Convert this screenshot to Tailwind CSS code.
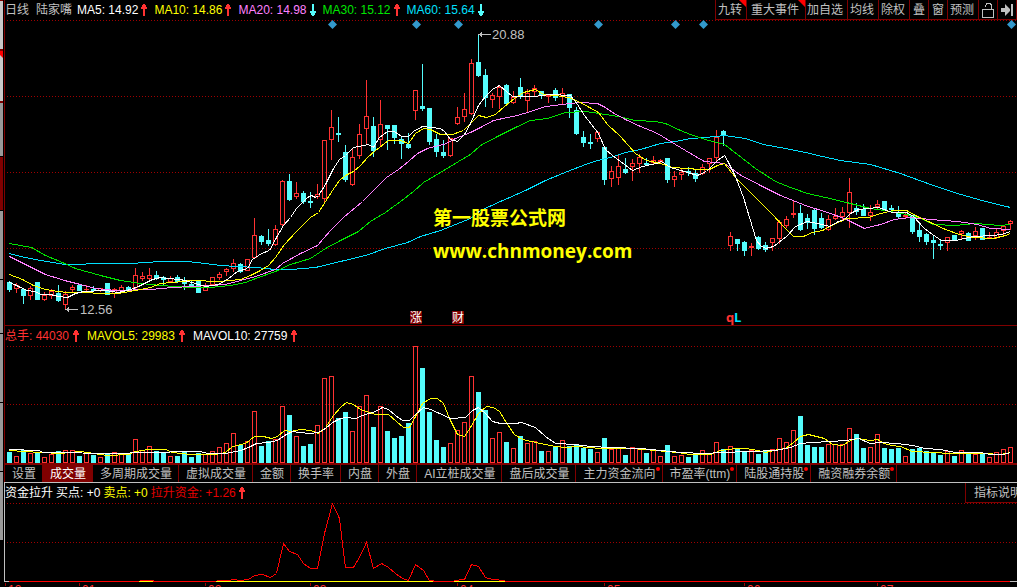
<!DOCTYPE html>
<html lang="zh-CN">
<head>
<meta charset="utf-8">
<title>陆家嘴 日线</title>
<script src="https://cdn.jsdelivr.net/npm/@tailwindcss/browser@4"></script>
</head>
<body class="bg-black text-[#c0c0c0] text-xs leading-5 font-['Liberation_Sans','Noto_Sans_CJK_SC',sans-serif]">
<svg class="hidden" aria-hidden="true">
  <symbol id="up" viewBox="0 0 6 12"><path d="M2 12V5H0V3H1V1H2V0H4V1H5V3H6V5H4V12Z" fill="#ff3232"/></symbol>
  <symbol id="down" viewBox="0 0 6 12"><path d="M2 0V7H0V9H1V11H2V12H4V11H5V9H6V7H4V0Z" fill="#54fcfc"/></symbol>
</svg>
<div class="flex h-screen overflow-hidden">
  <aside class="flex w-1 shrink-0 flex-col border-r border-black" aria-label="侧栏">
    <div class="h-[49px] border-t border-[#800000] bg-[#c8c8c8]"></div>
    <div class="h-0.5 bg-[#800000]"></div>
    <div class="h-[50px] bg-[#c8c8c8]"><svg viewBox="0 0 3 8" class="h-2 w-full"><path d="M0 0H3V7L0 4Z" fill="#f00"/></svg></div>
    <div class="h-0.5 bg-[#800000]"></div>
    <div class="h-[53px] bg-[#999]"></div>
    <div class="mt-px h-[53px] bg-[#800000]"></div>
    <div class="mt-px h-[68px] bg-[#999]"></div>
    <div class="mt-px h-[53px] bg-[#999]"></div>
    <div class="mt-px h-[68px] bg-[#999]"></div>
    <div class="mt-px h-[68px] bg-[#999]"></div>
    <div class="mt-px h-[68px] bg-[#999]"></div>
  </aside>
  <main class="flex min-w-0 flex-1 flex-col">
    <div class="border-l border-[#800000]">
      <header class="flex h-5 justify-between whitespace-nowrap">
        <div class="flex items-center gap-[7px]">
          <div class="flex gap-[7px]"><span>日线</span><span>陆家嘴</span></div>
          <div class="-ml-0.5 flex items-center gap-[3px] text-white">MA5: 14.92<svg class="h-3 w-1.5"><use href="#up"/></svg></div>
          <div class="flex items-center gap-[3px] text-[#ffff00]">MA10: 14.86<svg class="h-3 w-1.5"><use href="#up"/></svg></div>
          <div class="flex items-center gap-[3px] text-[#ff80ff]">MA20: 14.98<svg class="h-3 w-1.5"><use href="#down"/></svg></div>
          <div class="flex items-center gap-[3px] text-[#00e600]">MA30: 15.12<svg class="h-3 w-1.5"><use href="#up"/></svg></div>
          <div class="flex items-center gap-[3px] text-[#00e0ff]">MA60: 15.64<svg class="h-3 w-1.5"><use href="#down"/></svg></div>
        </div>
        <nav class="flex border-r border-b border-[#800000] *:border-l *:border-[#800000]">
          <button class="relative pr-1 pl-0.5">九转<svg class="absolute top-0 right-0 size-[7px]" viewBox="0 0 7 7"><path d="M0 0H7V7Z" fill="#f00"/></svg></button>
          <button class="relative pr-1.5 pl-1">重大事件<svg class="absolute top-0 right-0 size-[7px]" viewBox="0 0 7 7"><path d="M0 0H7V7Z" fill="#f00"/></svg></button>
          <button class="pr-1 pl-px">加自选</button>
          <button class="pr-1 pl-0.5">均线</button>
          <button class="pr-1 pl-0.5">除权</button>
          <button class="px-[3px]">叠</button>
          <button class="px-[3px]">窗</button>
          <button class="pr-1 pl-0.5">预测</button>
          <button class="px-[3px]" aria-label="锁定"><svg class="h-4 w-3" viewBox="0 0 12 16" fill="none" stroke="#c0c0c0" shape-rendering="crispEdges"><path d="M.5 7.5H11.5V15.5H.5Z"/><path d="M3.500 5V3.500L5 1.500H8L9.500 3V7"/></svg></button>
          <button class="px-[3px]" aria-label="移到最后"><svg class="h-3 w-3" viewBox="0 0 12 12" fill="#c0c0c0"><path d="M0 4H4V0L9 5V7L4 12V8H0ZM10 0H12V12H10Z"/></svg></button>
        </nav>
      </header>
      <section aria-label="K线图">
        <svg id="price" class="block h-[305px] w-full" viewBox="5 20 1012 305" preserveAspectRatio="none" shape-rendering="crispEdges"></svg>
      </section>
      <section class="border-t border-[#800000]" aria-label="成交量">
        <div class="flex h-5 items-center gap-2 whitespace-nowrap">
          <div class="flex items-center gap-1 text-[#ff3232]">总手: 44030<svg class="h-3 w-1.5"><use href="#up"/></svg></div>
          <div class="flex items-center gap-1 text-[#ffff00]">MAVOL5: 29983<svg class="h-3 w-1.5"><use href="#up"/></svg></div>
          <div class="flex items-center gap-1 text-white">MAVOL10: 27759<svg class="h-3 w-1.5"><use href="#up"/></svg></div>
        </div>
        <svg id="volume" class="block h-[117px] w-full" viewBox="5 346 1012 117" preserveAspectRatio="none" shape-rendering="crispEdges"></svg>
      </section>
      <nav class="flex h-[19px] border-t-2 border-[#800000] leading-4 whitespace-nowrap *:border-r *:border-[#800000] *:pr-1.5 *:pl-[7px]">
        <button>设置</button>
        <button class="bg-[#800000] text-white">成交量</button>
        <button>多周期成交量</button>
        <button>虚拟成交量</button>
        <button>金额</button>
        <button>换手率</button>
        <button>内盘</button>
        <button>外盘</button>
        <button>AI立桩成交量</button>
        <button>盘后成交量</button>
        <button class="relative">主力资金流向<i class="absolute top-0.5 right-0.5 size-1 rounded-full bg-[#f00]"></i></button>
        <button class="relative">市盈率(ttm)<i class="absolute top-0.5 right-0.5 size-1 rounded-full bg-[#f00]"></i></button>
        <button class="relative">陆股通持股<i class="absolute top-0.5 right-0.5 size-1 rounded-full bg-[#f00]"></i></button>
        <button class="relative">融资融券余额<i class="absolute top-0.5 right-0.5 size-1 rounded-full bg-[#f00]"></i></button>
      </nav>
    </div>
    <section class="border-t border-l border-[#c0c0c0]" aria-label="资金拉升">
      <div class="flex h-5 justify-between whitespace-nowrap">
        <div class="flex items-center gap-[3px] text-white">
          <span>资金拉升</span><span>买点: +0</span><span class="text-[#ffff00]">卖点: +0</span>
          <span class="flex items-center gap-[3px] text-[#e60000]">拉升资金: +1.26<svg class="h-3 w-1.5"><use href="#up"/></svg></span>
        </div>
        <button class="w-[52px] overflow-hidden border-b border-l border-[#800000] pl-2 text-left leading-[18px]">指标说明</button>
      </div>
      <svg id="fund" class="block h-[78px] w-full" viewBox="5 503 1012 78" preserveAspectRatio="none" shape-rendering="crispEdges"></svg>
    </section>
    <svg id="axis" class="block h-1.5 w-full shrink-0" viewBox="4 581 1013 6" preserveAspectRatio="none"></svg>
  </main>
</div>
<script>
// Each candle: direction (r = rise, c = fall), high, body top, body bottom, low
const candles = `c281,282,289,291 r283,285,288,292 c289,289,295,303 r286,288,295,299 c282,282,299,299 r292,295,299,300 r289,291,295,298 c285,293,300,301 r291,294,304,309 r285,287,289,291
c285,285,290,290 r285,289,289,291 c286,289,290,291 r288,288,290,291 c283,283,294,294 r288,289,293,297 r285,287,290,291 c286,287,289,290 r268,275,287,288 r272,276,278,280
r268,275,278,279 c271,275,278,279 c276,277,279,285 r276,278,281,281 c275,277,281,282 c277,281,283,289 c281,284,286,287 c281,281,292,292 r283,285,290,290 r277,277,284,285
r272,274,277,279 r268,269,271,275 r259,263,268,271 c263,264,271,272 r259,259,270,270 r218,235,257,258 c235,236,241,244 c229,240,243,245 r225,229,244,245 r180,181,224,225
c174,181,199,200 r182,193,196,198 c191,193,201,203 c192,201,202,207 r184,194,196,198 r140,140,198,201 r110,127,139,159 c117,133,134,141 c145,152,179,181 r148,157,184,185
r124,134,155,158 r80,116,128,144 c117,126,150,156 r100,124,139,146 c125,125,128,149 c125,125,137,143 c136,139,143,158 c133,144,147,148 r90,90,110,119 c64,106,108,110
c108,108,141,144 c134,139,151,156 c140,152,155,157 r138,138,155,156 r107,117,123,124 r93,109,116,121 r59,63,113,114 c34,62,75,76 c69,75,97,106 r93,95,99,107
r85,87,96,108 c84,85,103,104 r91,97,102,103 c78,87,96,98 r89,93,100,111 r85,88,91,95 c91,91,94,98 r94,95,96,102 c88,90,97,100 r88,93,96,103
c94,94,107,117 c107,110,133,134 c131,137,142,146 c134,142,143,148 r131,132,138,141 c146,147,179,184 r166,171,178,186 r155,166,177,184 c158,169,172,173 r159,163,166,180
r154,157,163,172 c158,163,164,165 r156,160,162,164 r159,160,161,162 c158,158,179,182 r171,176,179,186 r168,172,174,179 c167,171,172,175 c170,173,178,181 r164,167,173,174
r158,158,163,172 r130,137,157,160 c130,131,135,145 r232,236,245,250 c239,239,243,250 c241,242,250,255 r243,246,247,255 c236,237,248,249 c242,245,249,251 r238,238,242,250
r220,222,238,243 r216,219,225,227 r200,213,214,217 c205,213,229,230 c214,218,222,228 c208,210,228,234 c213,218,227,228 r215,219,229,230 r208,216,218,219 r207,212,216,219
r178,192,212,227 c203,208,211,214 c204,209,215,215 r205,212,215,220 r200,204,206,208 c201,201,210,210 c205,208,209,210 c206,213,216,218 r212,215,216,218 c215,215,231,233
c223,230,236,241 c233,234,241,244 c236,240,242,258 c240,244,245,249 r237,237,242,250 c235,235,239,240 r230,231,233,238 c232,233,240,240 r227,231,235,239 c228,228,239,239
r232,237,238,238 r229,232,237,238 r226,226,230,236 r220,221,223,229`.split(/\s+/).map(s => [s[0], ...s.slice(1).split(',').map(Number)]);
const volumes = [452,456,450,453,452,457,454,451,450,450,456,452,455,457,454,452,454,454,439,450,446,451,453,456,456,452,457,453,454,451,447,443,433,445,441,411,446,441,439,406,415,436,446,444,425,378,376,418,412,431,406,395,427,406,431,438,436,423,346,368,412,440,447,443,430,422,376,392,410,438,432,442,448,436,443,441,451,451,447,440,446,445,448,449,452,438,449,448,455,447,449,453,450,456,445,456,455,457,453,450,454,442,449,446,448,451,450,454,451,449,438,442,430,416,445,447,447,444,444,444,428,434,448,447,434,448,449,448,456,449,448,451,452,455,451,456,450,453,454,454,457,452,449,447];
const RED = '#ff3232', CYAN = '#54fcfc';
const line = (pts, color) => `<polyline points="${pts}" fill="none" stroke="${color}" transform="translate(.5 .5)"/>`;
const grid = ys => ys.map(y => `<path d="M7 ${y}.5H1017" stroke="#a00000" stroke-dasharray="1 2"/>`).join('');
const rect = (x, y, w, h, c) => `<rect x="${x}" y="${y}" width="${w}" height="${h}" fill="${c}"/>`;
const box = (x, y, h, c) => `<rect x="${x + .5}" y="${y + .5}" width="4" height="${h - 1}" fill="none" stroke="${c}"/>`;

let p = grid([20, 96, 172, 248]), v = grid([346, 404]);
candles.forEach(([d, hi, top, bot, lo], i) => {
  const x = 7 + 7 * i, h = bot - top + 1;
  if (d === 'c') {
    p += rect(x + 2, hi, 1, lo - hi + 1, CYAN) + rect(x, top, 5, h, CYAN);
    v += rect(x, volumes[i], 5, 463 - volumes[i], CYAN);
  } else {
    p += rect(x + 2, hi, 1, top - hi, RED) + rect(x + 2, bot, 1, lo - bot + 1, RED);
    p += h > 2 ? box(x, top, h, RED) : rect(x, top, 5, h, RED);
    v += box(x, volumes[i], 463 - volumes[i], RED);
  }
});
p += line('9,253 20,256 40,260 65,264 80,264 92,263 130,263 160,261 187,261 205,263 220,265 255,267 275,269 290,269 315,267 340,261 365,255 385,248 407,242 420,236 440,230 455,224 470,218 480,210 500,201 525,190 545,180 567,171 585,164 597,160 610,157 625,152 640,149 660,143 675,141 690,138 705,137 724,135 745,138 763,144 785,148 805,152 822,156 840,160 870,164 900,173 930,184 957,193 985,201 1010,207', '#00e0ff');
p += line('9,243 20,245 31,247 45,255 62,262 75,268 100,275 120,280 140,283 160,285 190,287 210,287 230,285 245,282 258,277 275,271 290,264 310,258 325,248 340,240 358,231 370,221 385,212 400,201 413,191 423,182 440,172 458,161 470,154 480,145 497,136 515,127 530,120 547,118 565,112 585,111 605,114 618,116 635,120 655,121 665,123 680,130 690,134 705,139 724,144 737,154 755,168 775,181 790,187 807,193 825,197 850,203 870,208 890,211 906,214 918,217 933,224 955,225 975,223 1000,225 1010,224', '#00e600');
p += line('9,256 27,265 45,274 64,280 80,284 95,288 115,290 150,289 172,287 210,285 225,284 240,280 255,276 275,269 282,263 300,253 317,245 330,230 343,217 362,201 374,189 386,177 398,169 408,161 417,153 427,148 446,143 455,138 470,132 480,127 493,120 507,117 517,115 530,111 545,106 570,103 580,102 597,103 605,107 612,112 625,119 640,126 655,132 662,136 675,144 690,153 704,161 724,163 739,174 760,185 780,195 805,205 827,212 844,218 864,228 880,224 894,219 910,217 930,219 957,221 977,224 990,228 1010,229', '#ff80ff');
p += line('9,274 22,279 33,285 45,289 58,291 66,292 118,293 140,289 150,287 160,283 172,282 190,280 220,281 240,279 250,275 260,270 268,265 275,257 284,244 296,231 310,217 318,212 325,201 332,190 339,180 345,175 353,171 360,165 367,157 375,150 388,140 400,140 408,143 415,133 423,128 430,129 440,134 452,134 463,130 471,122 478,115 486,117 495,114 504,106 514,98 523,92 535,89 543,94 555,95 568,97 580,102 598,112 607,124 620,136 635,153 646,160 660,163 672,167 700,169 709,169 717,165 724,163 735,177 750,192 770,212 785,228 793,236 803,236 812,232 822,230 835,223 847,218 868,217 880,213 893,210 906,210 917,216 930,222 945,229 959,234 972,237 993,238 1005,235 1010,233', '#ffff00');
p += line('9,282 14,284 20,287 27,290 34,291 41,294 50,294 58,296 67,297 75,293 83,291 105,290 118,292 130,289 138,286 152,279 160,277 166,278 180,279 188,281 205,286 218,284 228,278 237,271 247,268 252,259 261,253 269,250 276,237 283,225 290,217 296,208 302,202 307,197 311,195 315,197 318,195 325,184 333,168 339,159 345,155 353,147 363,145 368,144 373,147 379,137 387,131 394,131 401,136 408,136 413,131 422,126 430,127 440,128 444,131 450,139 457,141 464,134 470,123 478,105 485,96 492,89 499,85 506,91 512,96 533,96 550,94 570,95 577,104 584,115 591,124 598,133 605,149 612,155 620,161 632,170 642,166 656,163 661,161 670,167 677,169 687,172 697,175 706,171 717,160 724,155 727,160 735,176 743,197 756,240 760,245 765,248 773,246 786,236 795,226 807,221 822,224 829,226 838,221 844,219 850,213 858,209 868,208 878,207 892,212 906,212 913,216 924,228 932,234 941,240 955,240 973,236 993,235 1001,234 1010,231', '#fff');
p += [332, 416, 458, 598, 675, 703, 1011].map(x => `<path d="M${x + .5} 20l4.500 4.500l-4.500 4.500l-4.500-4.500Z" fill="#3399cc" shape-rendering="auto"/>`).join('');
p += `<path d="M479 34.500H491M66 309.500H78" stroke="#c0c0c0"/>
<g fill="#c0c0c0" font-size="13"><path d="M478 34.500L482 32V37Z"/><path d="M65 309.500L69 307V312Z"/><text x="492" y="39">20.88</text><text x="80" y="314">12.56</text></g>
<g fill="#ffff00" font-weight="700" font-size="19"><text x="433" y="225">第一股票公式网</text><text x="433" y="258" font-family="Open Sans">www.chnmoney.com</text></g>
${rect(410, 311, 12, 13, '#800000')}${rect(452, 311, 12, 13, '#800000')}
<g fill="#fff" font-size="12"><text x="410" y="322">涨</text><text x="452" y="322">财</text></g>
<g font-family="Open Sans" font-weight="700" font-size="13"><text x="726" y="322" fill="${RED}">q</text><text x="734" y="322" fill="#00e0ff">L</text></g>`;
v += line('9,450 40,452 60,453 80,451 100,454 107,455 128,454 135,451 148,449 165,449 172,452 190,454 215,454 225,452 232,446 245,443 254,436 263,436 271,438 277,436 284,430 290,431 300,429 310,430 318,433 325,427 333,415 340,407 346,402 353,404 360,409 375,414 388,414 396,421 403,427 409,427 415,416 422,403 430,398 437,398 443,403 449,418 457,434 464,436 470,427 478,413 486,406 493,407 499,411 507,424 514,434 522,439 540,443 555,446 565,447 577,446 600,448 632,448 677,452 690,454 710,454 720,450 735,448 745,448 757,450 765,452 773,450 785,448 793,442 800,436 808,434 816,436 824,438 832,444 842,445 850,440 857,438 870,440 877,439 884,443 891,445 900,446 912,451 932,452 950,453 985,453 1000,454 1010,452', '#ffff00');
v += line('9,449 38,450 43,452 120,453 140,452 200,451 207,453 225,453 240,450 248,447 256,443 268,442 277,440 284,435 292,431 299,432 310,433 318,432 325,428 332,422 340,418 346,417 355,418 362,415 375,411 382,407 388,409 395,415 402,420 409,420 415,414 423,407 430,409 437,412 450,418 465,417 472,410 478,407 485,413 492,421 500,423 515,423 521,422 535,427 545,436 555,443 575,444 590,446 610,447 640,448 660,450 680,452 705,453 720,452 750,451 775,450 790,447 800,443 812,442 830,441 845,440 858,438 870,443 880,442 897,443 912,445 925,448 940,449 955,452 980,452 990,454 1003,454 1010,452', '#fff');
document.getElementById('price').innerHTML = p;
document.getElementById('volume').innerHTML = v;
document.getElementById('fund').innerHTML = grid([503, 542]) + line('139,580 153,580', '#f00')
  + line('216,580 228,580 233,579 240,580 248,579 254,575 262,574 270,577 276,573 283,543 289,551 297,554 303,563 310,568 317,568 324,533 332,503 339,518 341,535 345,567 353,567 360,555 366,542 373,568 381,563 388,567 395,573 402,578 408,580 415,564 423,570 429,580 433,580', '#f00')
  + line('454,580 464,579 471,564 478,566 485,577 492,579 505,580', '#f00');
document.getElementById('axis').innerHTML = rect(4, 581, 5, 1, '#c0c0c0') + rect(9, 581, 1001, 1, '#f00') + rect(1010, 581, 7, 1, '#c0c0c0')
  + rect(139, 581, 14, 1, '#ffff00') + rect(216, 581, 217, 1, '#ffff00') + rect(454, 581, 51, 1, '#ffff00')
  + [[5, '12'], [79, '01'], [205, '02'], [310, '03'], [457, '04'], [604, '05'], [744, '06'], [877, '07']].map(([x, m]) =>
    rect(x, 583, 1, 3, '#a00000') + `<text x="${x + 3}" y="594" font-size="12" fill="${RED}">${m}</text>`).join('');
</script>
</body>
</html>
